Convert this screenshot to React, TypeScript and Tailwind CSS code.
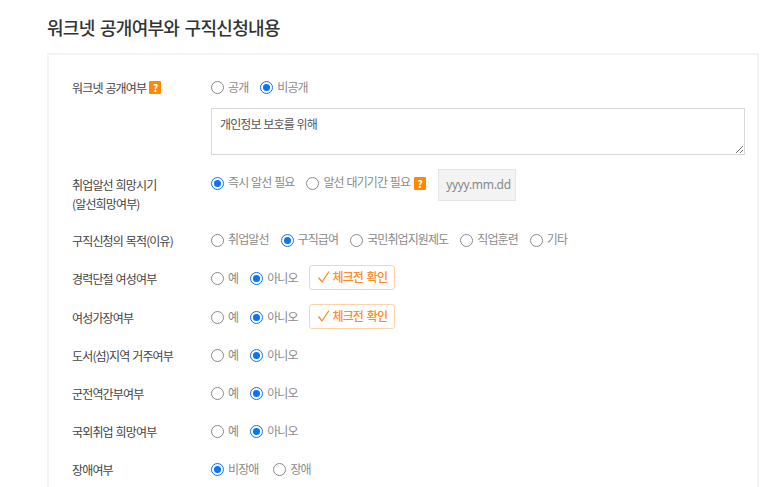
import React from 'react';

const FONT = "font-['Noto_Sans_CJK_KR','Noto_Sans',sans-serif]";

const Radio = ({ label, checked = false }: { label: string; checked?: boolean }) => (
    <label className="flex items-center gap-[4px] h-[16px]">
        <span className={`w-[13px] h-[13px] rounded-full flex items-center justify-center bg-white ${checked ? 'border-[1.5px] border-[#0b74f1]' : 'border border-[#8a8a8a]'}`}>
            {checked && <span className="w-[7px] h-[7px] rounded-full bg-[#0b74f1]" />}
        </span>
        <span className="text-[12px] leading-[16px] tracking-[-0.9px] [word-spacing:1px] text-[#8a8a8a] -mt-[2px]">{label}</span>
    </label>
);

const Help = () => (
    <span className="w-[12px] h-[13px] rounded-[1px] bg-[#ff8a00] text-white text-[10px] leading-[13px] font-bold text-center">?</span>
);

const CheckButton = () => (
    <button className="flex items-center gap-[2px] w-[86px] h-[25px] pl-[7px] mb-[3px] rounded-[3px] border border-[#ffd3a8] bg-white">
        <svg width="14" height="14" viewBox="0 0 14 14" fill="none" stroke="#ff8a2a" strokeWidth="1.3">
            <path d="M1.5 7.5 L5 12 L12 1.5" />
        </svg>
        <span className="text-[12px] font-medium tracking-[-0.9px] [word-spacing:2px] text-[#ff8a2a]">체크전 확인</span>
    </button>
);

const Row = ({ label, className, children }: { label: React.ReactNode; className?: string; children: React.ReactNode }) => (
    <div className={`flex items-center ${className ?? ''}`}>
        <div className="w-[139px] shrink-0 text-[12px] leading-[19px] tracking-[-0.85px] [word-spacing:1px] text-[#444]">{label}</div>
        {children}
    </div>
);

const YesNo = () => (
    <div className="flex items-center gap-[12px]">
        <Radio label="예" />
        <Radio label="아니오" checked />
    </div>
);

export default function App() {
    return (
        <div className={`w-[773px] h-[487px] overflow-hidden bg-white ${FONT}`}>
            <div className="ml-[47px] w-[712px]">
                <h2 className="pt-[15px] h-[53px] text-[18px] leading-[24px] font-medium tracking-[-0.7px] [word-spacing:2px] text-[#333]">
                    워크넷 공개여부와 구직신청내용
                </h2>
                <div className="border-2 border-[#f3f3f3] pl-[23px] pr-[12px] pt-[23px] h-[500px]">
                    <Row label={<span className="flex items-center gap-[3px]">워크넷 공개여부 <Help /></span>}>
                        <div className="flex items-center gap-[12px]">
                            <Radio label="공개" />
                            <Radio label="비공개" checked />
                        </div>
                    </Row>
                    <div className="ml-[139px] mt-[11px] h-[47px] border border-[#d9d9d9] relative px-[8px] py-[6px] text-[12px] leading-[18px] text-[#555] tracking-[-0.9px] [word-spacing:1px]">
                        개인정보 보호를 위해
                        <svg className="absolute right-0 bottom-0" width="9" height="9" viewBox="0 0 9 9" stroke="#777" strokeWidth="1">
                            <path d="M1 8 L8 1 M5 8 L8 5" />
                        </svg>
                    </div>
                    <div className="flex mt-[14px] h-[45px]">
                        <div className="w-[139px] shrink-0 pt-[6px] text-[12px] leading-[19px] tracking-[-0.85px] [word-spacing:1px] text-[#444]">
                            취업알선 희망시기<br />(알선희망여부)
                        </div>
                        <div className="flex items-start">
                            <div className="flex items-center gap-[12px] pt-[6px]">
                                <Radio label="즉시 알선 필요" checked />
                                <div className="flex items-center gap-[4px]">
                                    <Radio label="알선 대기기간 필요" />
                                    <Help />
                                </div>
                            </div>
                            <div className="ml-[12px] w-[78px] h-[32px] border border-[#e5e5e5] bg-[#f3f3f3] pl-[7px] font-['Noto_Sans',sans-serif] text-[12px] leading-[30px] tracking-[-0.3px] text-[#888]">yyyy.mm.dd</div>
                        </div>
                    </div>
                    <Row label="구직신청의 목적(이유)" className="mt-[14px] h-[24px]">
                        <div className="flex items-center gap-[12px]">
                            <Radio label="취업알선" />
                            <Radio label="구직급여" checked />
                            <Radio label="국민취업지원제도" />
                            <Radio label="직업훈련" />
                            <Radio label="기타" />
                        </div>
                    </Row>
                    <Row label="경력단절 여성여부" className="mt-[14px] h-[25px]">
                        <YesNo />
                        <div className="ml-[11px]"><CheckButton /></div>
                    </Row>
                    <Row label="여성가장여부" className="mt-[14px] h-[25px]">
                        <YesNo />
                        <div className="ml-[11px]"><CheckButton /></div>
                    </Row>
                    <Row label="도서(섬)지역 거주여부" className="mt-[13px] h-[25px]"><YesNo /></Row>
                    <Row label="군전역간부여부" className="mt-[13px] h-[25px]"><YesNo /></Row>
                    <Row label="국외취업 희망여부" className="mt-[13px] h-[25px]"><YesNo /></Row>
                    <Row label="장애여부" className="mt-[13px] h-[25px]">
                        <div className="flex items-center gap-[15px]">
                            <Radio label="비장애" checked />
                            <Radio label="장애" />
                        </div>
                    </Row>
                </div>
            </div>
        </div>
    );
}
